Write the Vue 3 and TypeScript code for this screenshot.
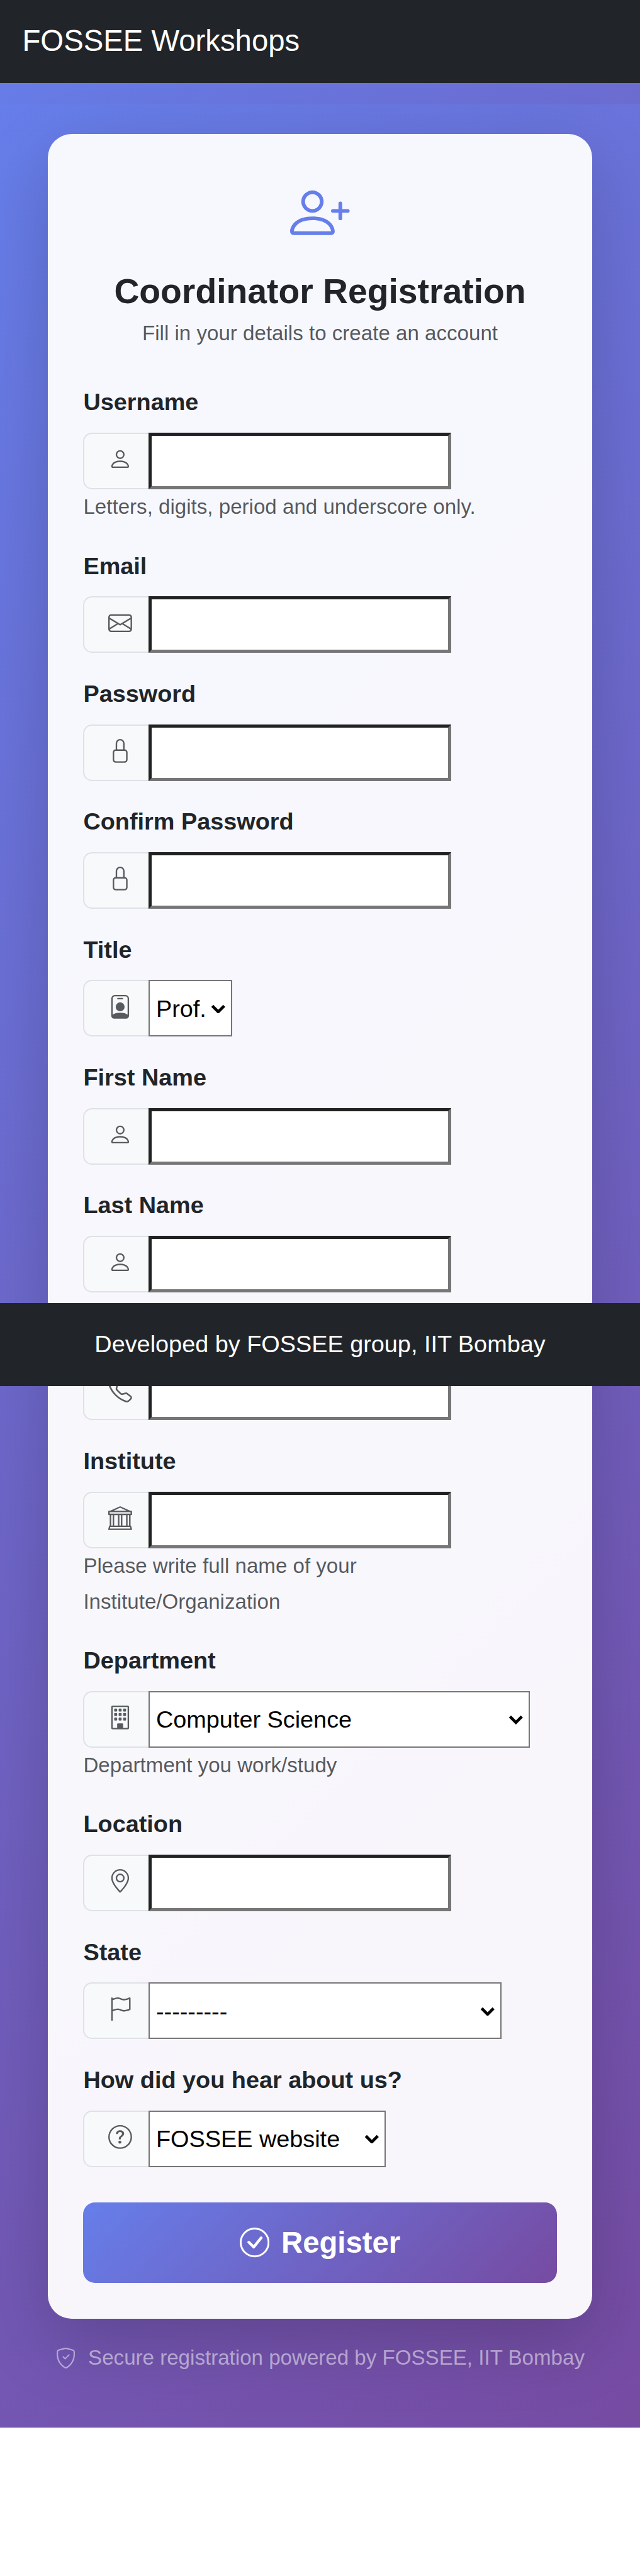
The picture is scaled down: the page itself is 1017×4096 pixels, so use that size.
<script setup lang="ts">
interface Field {
  label: string
  icon: keyof typeof icons
  kind: 'input' | 'select'
  value?: string
  size?: string
  help?: string[]
}

const pane = (x: number, y: number): string =>
  `M${x} ${y + 0.5}a.5.5 0 0 1 .5-.5h1a.5.5 0 0 1 .5.5v1a.5.5 0 0 1-.5.5h-1a.5.5 0 0 1-.5-.5z`

const ring = 'M8 15A7 7 0 1 1 8 1a7 7 0 0 1 0 14m0 1A8 8 0 1 0 8 0a8 8 0 0 0 0 16'

const icons = {
  person:
    'M8 8a3 3 0 1 0 0-6 3 3 0 0 0 0 6m2-3a2 2 0 1 1-4 0 2 2 0 0 1 4 0m4 8c0 1-1 1-1 1H3s-1 0-1-1 1-4 6-4 6 3 6 4m-1-.004c-.001-.246-.154-.986-.832-1.664C11.516 10.68 10.289 10 8 10s-3.516.68-4.168 1.332c-.678.678-.83 1.418-.832 1.664z',
  personPlus:
    'M6 8a3 3 0 1 0 0-6 3 3 0 0 0 0 6m2-3a2 2 0 1 1-4 0 2 2 0 0 1 4 0m4 8c0 1-1 1-1 1H1s-1 0-1-1 1-4 6-4 6 3 6 4m-1-.004c-.001-.246-.154-.986-.832-1.664C9.516 10.68 8.289 10 6 10s-3.516.68-4.168 1.332c-.678.678-.83 1.418-.832 1.664zM13.5 5a.5.5 0 0 1 .5.5V7h1.5a.5.5 0 0 1 0 1H14v1.5a.5.5 0 0 1-1 0V8h-1.5a.5.5 0 0 1 0-1H13V5.5a.5.5 0 0 1 .5-.5',
  envelope:
    'M0 4a2 2 0 0 1 2-2h12a2 2 0 0 1 2 2v8a2 2 0 0 1-2 2H2a2 2 0 0 1-2-2zm2-1a1 1 0 0 0-1 1v.217l7 4.2 7-4.2V4a1 1 0 0 0-1-1zm13 2.383-4.708 2.825L15 11.105zm-.034 6.876-5.64-3.471L8 9.583l-1.326-.795-5.64 3.47A1 1 0 0 0 2 13h12a1 1 0 0 0 .966-.741M1 11.105l4.708-2.897L1 5.383z',
  lock: 'M8 1a2 2 0 0 1 2 2v4H6V3a2 2 0 0 1 2-2m3 6V3a3 3 0 0 0-6 0v4a2 2 0 0 0-2 2v5a2 2 0 0 0 2 2h6a2 2 0 0 0 2-2V9a2 2 0 0 0-2-2M5 8h6a1 1 0 0 1 1 1v5a1 1 0 0 1-1 1H5a1 1 0 0 1-1-1V9a1 1 0 0 1 1-1',
  badge:
    'M6.5 2a.5.5 0 0 0 0 1h3a.5.5 0 0 0 0-1zM11 8a3 3 0 1 1-6 0 3 3 0 0 1 6 0M4.5 0A2.5 2.5 0 0 0 2 2.5V14a2 2 0 0 0 2 2h8a2 2 0 0 0 2-2V2.5A2.5 2.5 0 0 0 11.5 0zM3 2.5A1.5 1.5 0 0 1 4.5 1h7A1.5 1.5 0 0 1 13 2.5v10.795a4.2 4.2 0 0 0-.776-.492C11.392 12.387 10.063 12 8 12s-3.392.387-4.224.803a4.2 4.2 0 0 0-.776.492z',
  telephone:
    'M3.654 1.328a.678.678 0 0 0-1.015-.063L1.605 2.3c-.483.484-.661 1.169-.45 1.77a17.6 17.6 0 0 0 4.168 6.608 17.6 17.6 0 0 0 6.608 4.168c.601.211 1.286.033 1.77-.45l1.034-1.034a.678.678 0 0 0-.063-1.015l-2.307-1.794a.68.68 0 0 0-.58-.122l-2.19.547a1.75 1.75 0 0 1-1.657-.459L5.482 8.062a1.75 1.75 0 0 1-.46-1.657l.548-2.19a.68.68 0 0 0-.122-.58zM1.884.511a1.745 1.745 0 0 1 2.612.163L6.29 2.98c.329.423.445.974.315 1.494l-.547 2.19a.68.68 0 0 0 .178.643l2.457 2.457a.68.68 0 0 0 .644.178l2.189-.547a1.75 1.75 0 0 1 1.494.315l2.306 1.794c.829.645.905 1.87.163 2.611l-1.034 1.034c-.74.74-1.846 1.065-2.877.702a18.6 18.6 0 0 1-7.01-4.42 18.6 18.6 0 0 1-4.42-7.009c-.362-1.03-.037-2.137.703-2.877z',
  bank: 'm8 0 6.61 3h.89a.5.5 0 0 1 .5.5v2a.5.5 0 0 1-.5.5H15v7a.5.5 0 0 1 .485.38l.5 2a.498.498 0 0 1-.485.62H.5a.498.498 0 0 1-.485-.62l.5-2A.5.5 0 0 1 1 13V6H.5a.5.5 0 0 1-.5-.5v-2A.5.5 0 0 1 .5 3h.89zM3.777 3h8.447L8 1zM2 6v7h1V6zm2 0v7h2.5V6zm3.5 0v7h1V6zm2 0v7H12V6zM13 6v7h1V6zm2-1V4H1v1zm-.39 9H1.39l-.25 1h13.72z',
  building:
    [2, 5, 8].map((y) => [4, 7, 10].map((x) => pane(x, y)).join('')).join('') +
    'M2 1a1 1 0 0 1 1-1h10a1 1 0 0 1 1 1v14a1 1 0 0 1-1 1H3a1 1 0 0 1-1-1zm11 0H3v14h3v-2.5a.5.5 0 0 1 .5-.5h3a.5.5 0 0 1 .5.5V15h3z',
  geo: 'M12.166 8.94c-.524 1.062-1.234 2.12-1.96 3.07A32 32 0 0 1 8 14.58a32 32 0 0 1-2.206-2.57c-.726-.95-1.436-2.008-1.96-3.07C3.304 7.867 3 6.862 3 6a5 5 0 0 1 10 0c0 .862-.305 1.867-.834 2.94M8 16s6-5.686 6-10A6 6 0 0 0 2 6c0 4.314 6 10 6 10M8 8a2 2 0 1 1 0-4 2 2 0 0 1 0 4m0 1a3 3 0 1 0 0-6 3 3 0 0 0 0 6',
  flag: 'M14.778.085A.5.5 0 0 1 15 .5V8a.5.5 0 0 1-.314.464L14.5 8l.186.464-.003.001-.006.003-.023.009a12 12 0 0 1-.397.15c-.264.095-.631.223-1.047.35-.816.252-1.879.523-2.71.523-.847 0-1.548-.28-2.158-.525l-.028-.01C7.68 8.71 7.14 8.5 6.5 8.5c-.7 0-1.638.23-2.437.477A20 20 0 0 0 3 9.342V15.5a.5.5 0 0 1-1 0V.5a.5.5 0 0 1 1 0v.282c.226-.079.496-.17.79-.26C4.606.272 5.67 0 6.5 0c.84 0 1.524.277 2.121.519l.043.018C9.286.788 9.828 1 10.5 1c.7 0 1.638-.23 2.437-.477a20 20 0 0 0 1.349-.476l.019-.007.004-.002h.001M14 1.221c-.22.078-.48.167-.766.255-.81.252-1.872.523-2.734.523-.886 0-1.592-.286-2.203-.534l-.008-.003C7.662 1.21 7.139 1 6.5 1c-.669 0-1.606.229-2.415.478A21 21 0 0 0 3 1.845v6.433c.22-.078.48-.167.766-.255C4.576 7.77 5.638 7.5 6.5 7.5c.847 0 1.548.28 2.158.525l.028.01C9.32 8.29 9.86 8.5 10.5 8.5c.668 0 1.606-.229 2.415-.478A21 21 0 0 0 14 7.655V1.222z',
  question:
    ring +
    'M5.255 5.786a.237.237 0 0 0 .241.247h.825c.138 0 .248-.113.266-.25.09-.656.54-1.134 1.342-1.134.686 0 1.314.343 1.314 1.168 0 .635-.374.927-.965 1.371-.673.489-1.206 1.06-1.168 1.987l.003.217a.25.25 0 0 0 .25.246h.811a.25.25 0 0 0 .25-.25v-.105c0-.718.273-.927 1.01-1.486.609-.463 1.244-.977 1.244-2.056 0-1.511-1.276-2.241-2.673-2.241-1.267 0-2.655.59-2.75 2.286m1.557 5.763c0 .533.425.927 1.01.927.609 0 1.028-.394 1.028-.927 0-.552-.42-.94-1.029-.94-.584 0-1.009.388-1.009.94',
  check:
    ring +
    'm2.97-11.03-.02.022-3.473 4.425-2.093-2.094a.75.75 0 0 0-1.06 1.06L6.97 11.03a.75.75 0 0 0 1.079-.02l3.992-4.99a.75.75 0 0 0-1.071-1.05',
  shield:
    'M5.338 1.59a61 61 0 0 0-2.837.856.48.48 0 0 0-.328.39c-.554 4.157.726 7.19 2.253 9.188a10.7 10.7 0 0 0 2.287 2.233c.346.244.652.42.893.533q.18.085.293.118a1 1 0 0 0 .101.025 1 1 0 0 0 .1-.025q.114-.034.294-.118c.24-.113.547-.29.893-.533a10.7 10.7 0 0 0 2.287-2.233c1.527-1.997 2.807-5.031 2.253-9.188a.48.48 0 0 0-.328-.39c-.651-.213-1.75-.56-2.837-.855C9.552 1.29 8.531 1.067 8 1.067c-.53 0-1.552.223-2.662.524zM5.072.56C6.157.265 7.31 0 8 0s1.843.265 2.928.56c1.11.3 2.229.655 2.887.87a1.54 1.54 0 0 1 1.044 1.262c.596 4.477-.787 7.795-2.465 9.99a11.8 11.8 0 0 1-2.517 2.453 7 7 0 0 1-1.048.625c-.28.132-.581.24-.829.24s-.548-.108-.829-.24a7 7 0 0 1-1.048-.625 11.8 11.8 0 0 1-2.517-2.453C1.928 10.487.545 7.169 1.141 2.692A1.54 1.54 0 0 1 2.185 1.43 63 63 0 0 1 5.072.56M10.854 5.146a.5.5 0 0 1 0 .708l-3 3a.5.5 0 0 1-.708 0l-1.5-1.5a.5.5 0 1 1 .708-.708L7.5 7.793l2.646-2.647a.5.5 0 0 1 .708 0',
}

const fields: Field[] = [
  { label: 'Username', icon: 'person', kind: 'input', help: ['Letters, digits, period and underscore only.'] },
  { label: 'Email', icon: 'envelope', kind: 'input' },
  { label: 'Password', icon: 'lock', kind: 'input' },
  { label: 'Confirm Password', icon: 'lock', kind: 'input' },
  { label: 'Title', icon: 'badge', kind: 'select', value: 'Prof.', size: 'xs' },
  { label: 'First Name', icon: 'person', kind: 'input' },
  { label: 'Last Name', icon: 'person', kind: 'input' },
  { label: '\u00a0', icon: 'telephone', kind: 'input' },
  {
    label: 'Institute',
    icon: 'bank',
    kind: 'input',
    help: ['Please write full name of your', 'Institute/Organization'],
  },
  {
    label: 'Department',
    icon: 'building',
    kind: 'select',
    value: 'Computer Science',
    size: 'lg',
    help: ['Department you work/study'],
  },
  { label: 'Location', icon: 'geo', kind: 'input' },
  { label: 'State', icon: 'flag', kind: 'select', value: '---------', size: 'md' },
  { label: 'How did you hear about us?', icon: 'question', kind: 'select', value: 'FOSSEE website', size: 'sm' },
]
</script>

<template>
  <div class="page">
    <nav class="navbar">
      <span class="brand">FOSSEE Workshops</span>
    </nav>

    <div class="backdrop">
      <main class="main">
        <section class="card">
          <header class="head">
            <svg class="head-icon" viewBox="0 0 16 16"><path :d="icons.personPlus" /></svg>
            <h3>Coordinator Registration</h3>
            <p>Fill in your details to create an account</p>
          </header>

          <form @submit.prevent>
            <div v-for="f in fields" :key="f.label" class="field">
              <label>{{ f.label }}</label>
              <div class="group">
                <span class="addon">
                  <svg viewBox="0 0 16 16"><path :d="icons[f.icon]" /></svg>
                </span>
                <input v-if="f.kind === 'input'" class="control" type="text" />
                <div v-else class="select" :class="f.size">
                  <span>{{ f.value }}</span>
                  <svg viewBox="0 0 10 6"><path d="M1 1l4 4 4-4" /></svg>
                </div>
              </div>
              <div v-for="line in f.help" :key="line" class="help"><small>{{ line }}</small></div>
            </div>

            <button type="submit" class="submit">
              <svg viewBox="0 0 16 16"><path :d="icons.check" /></svg>
              <span>Register</span>
            </button>
          </form>
        </section>

        <p class="secure">
          <svg viewBox="0 0 16 16"><path :d="icons.shield" /></svg>
          <span>Secure registration powered by FOSSEE, IIT Bombay</span>
        </p>
      </main>
    </div>

    <footer class="footer">Developed by FOSSEE group, IIT Bombay</footer>
  </div>
</template>

<style>
/* 1rem = 16 layout units on a 430-unit wide page */
html {
  font-size: calc(100vw / 430 * 16);
}
body {
  margin: 0;
  background: #fff;
}
</style>

<style scoped>
.page {
  position: relative;
  height: 108.24rem;
  overflow: hidden;
  font-family: 'Liberation Sans', Arial, sans-serif;
  font-size: 1rem;
  line-height: 1.5;
  color: #212529;
}
.page * {
  box-sizing: border-box;
}
svg {
  display: block;
  flex: none;
  fill: currentColor;
}

.navbar {
  display: flex;
  align-items: center;
  height: 3.5rem;
  padding: 0 0.9375rem 0.03rem;
  background: #212529;
}
.brand {
  font-size: 1.25rem;
  color: #fff;
}

.backdrop {
  padding-top: 0.875rem;
  background: linear-gradient(135deg, #667eea 0%, #764ba2 100%) 0 -3.5rem / 100% 58.25rem no-repeat;
}
.main {
  height: 97.625rem;
  padding: 1.25rem 2rem 0;
  background: linear-gradient(135deg, #667eea 0%, #764ba2 100%);
}

.card {
  height: 91.8125rem;
  padding: 1.5rem;
  border-radius: 1rem;
  background: rgba(255, 255, 255, 0.95);
  box-shadow: 0 1rem 3rem rgba(0, 0, 0, 0.175);
}
.head {
  display: flex;
  flex-direction: column;
  align-items: center;
  margin-bottom: 1.5rem;
}
.head-icon {
  width: 2.5rem;
  height: 2.5rem;
  margin: 0.5625rem 0 1.1875rem;
  color: #667eea;
}
.head h3 {
  margin: 0 0 0.23rem;
  font-size: 1.46125rem;
  font-weight: 700;
  line-height: 1.75rem;
}
.head p {
  margin: 0 0 0.02rem;
  font-size: 0.875rem;
  color: rgba(33, 37, 41, 0.75);
}

.field {
  margin-bottom: 1rem;
}
label {
  display: block;
  margin-bottom: 0.55rem;
  font-weight: 700;
  line-height: 1.45rem;
}
.group {
  display: flex;
  height: 2.375rem;
}
.addon {
  width: 2.75rem;
  padding: 0.5625rem 0 0 1rem;
  border: 0.0625rem solid #dee2e6;
  border-right: 0;
  border-radius: 0.375rem 0 0 0.375rem;
  background: #f8f9fa;
  color: rgba(33, 37, 41, 0.75);
}
.addon svg {
  width: 1rem;
  height: 1rem;
}
.control {
  width: 12.6875rem;
  margin: 0;
  padding: 0;
  border: 0.1325rem solid;
  border-color: #212121 #767676 #767676 #212121;
  border-radius: 0;
  outline: 0;
  background: #fff;
}
.select {
  display: flex;
  align-items: center;
  justify-content: space-between;
  padding: 0.04rem 0.22rem 0 0.25rem;
  border: 0.0625rem solid #767676;
  background: #fff;
  color: #000;
}
.select svg {
  width: 0.625rem;
  height: 0.375rem;
  fill: none;
  stroke: #000;
  stroke-width: 2;
}
.xs {
  width: 3.5rem;
}
.sm {
  width: 9.9375rem;
}
.md {
  width: 14.8125rem;
}
.lg {
  width: 16rem;
}
.help {
  height: 1.5rem;
  line-height: 1.42rem;
  color: rgba(33, 37, 41, 0.75);
}
.help small {
  font-size: 0.875rem;
}

.submit {
  display: flex;
  align-items: center;
  justify-content: center;
  gap: 0.5rem;
  width: 100%;
  height: 3.375rem;
  margin: 1.5rem 0 0;
  padding: 0;
  border: 0;
  border-radius: 0.5rem;
  background: linear-gradient(135deg, #667eea 0%, #764ba2 100%);
  color: #fff;
  font-family: inherit;
  font-size: 1.25rem;
  font-weight: 700;
  line-height: 1.5;
}
.submit svg {
  width: 1.25rem;
  height: 1.25rem;
}
.submit span {
  padding-top: 0.03rem;
}

.secure {
  display: flex;
  align-items: center;
  justify-content: center;
  gap: 0.5rem;
  margin: 1rem -1rem 0;
  font-size: 0.875rem;
  line-height: 1.28rem;
  color: rgba(255, 255, 255, 0.5);
  white-space: nowrap;
}
.secure svg {
  width: 0.875rem;
  height: 0.875rem;
}

.footer {
  position: absolute;
  top: 54.75rem;
  left: 0;
  display: flex;
  align-items: center;
  justify-content: center;
  width: 100%;
  height: 3.5rem;
  padding-bottom: 0.05rem;
  background: #212529;
  color: #fff;
}
</style>
